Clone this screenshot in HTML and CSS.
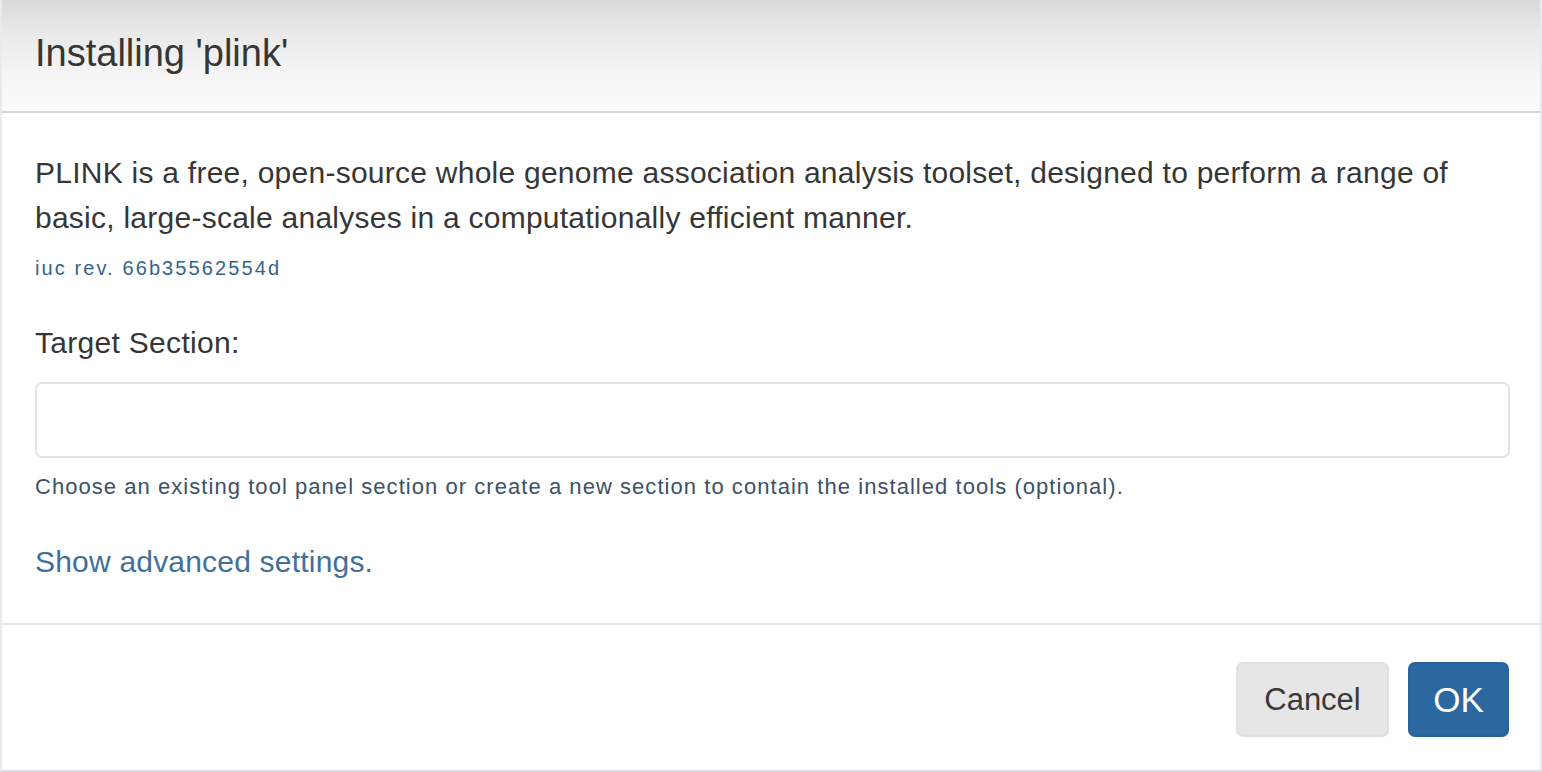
FILE: index.html
```html
<!DOCTYPE html>
<html>
<head>
<meta charset="utf-8">
<title>Installing 'plink'</title>
<link rel="stylesheet" href="styles.css">
</head>
<body>
<div class="modal">
  <div class="modal-header">
    <h4 class="modal-title">Installing 'plink'</h4>
  </div>
  <div class="modal-body">
    <p class="desc">PLINK is a free, open-source whole genome association analysis toolset, designed to perform a range of basic, large-scale analyses in a computationally efficient manner.</p>
    <div class="rev">iuc rev. 66b35562554d</div>
    <label class="label">Target Section:</label>
    <input class="input" type="text">
    <div class="help">Choose an existing tool panel section or create a new section to contain the installed tools (optional).</div>
    <a class="advanced" href="#">Show advanced settings.</a>
  </div>
  <div class="modal-footer">
    <button class="btn btn-default">Cancel</button>
    <button class="btn btn-primary">OK</button>
  </div>
</div>
</body>
</html>
```

FILE: styles.css
```css
html, body {
  margin: 0;
  padding: 0;
  background: #ffffff;
}
body {
  font-family: "Liberation Sans", Arial, sans-serif;
  color: #333333;
}
.modal {
  box-sizing: border-box;
  width: 1542px;
  height: 772px;
  display: flex;
  flex-direction: column;
  border-left: 2px solid #e6ebf1;
  border-right: 2px solid #e6ebf1;
  border-bottom: 2px solid #d9dce0;
  background: #ffffff;
}
.modal-header {
  box-sizing: border-box;
  height: 113px;
  padding: 0 33px;
  display: flex;
  align-items: center;
  background: linear-gradient(to bottom, #d9d9d9 0%, #e9e9e9 30%, #f5f5f5 65%, #fbfbfb 100%);
  border-bottom: 2px solid #d4d4d4;
}
.modal-title {
  margin: 0;
  font-weight: normal;
  font-size: 38px;
  line-height: 44px;
  color: #363636;
  padding-bottom: 6px;
}
.modal-body {
  flex: 1;
  display: flex;
  flex-direction: column;
  align-items: flex-start;
  padding: 37px 33px 0 33px;
}
.desc {
  margin: 0;
  font-size: 30px;
  letter-spacing: 0.25px;
  line-height: 45px;
  color: #363636;
}
.rev {
  margin-top: 14px;
  font-size: 20px;
  letter-spacing: 2.1px;
  line-height: 28px;
  color: #35648a;
}
.label {
  margin-top: 38px;
  font-size: 30px;
  letter-spacing: 0.3px;
  line-height: 45px;
  color: #363636;
}
.input {
  box-sizing: border-box;
  margin-top: 17px;
  width: 1475px;
  height: 76px;
  border: 2px solid #e3e3e3;
  border-radius: 7px;
  background: #ffffff;
  outline: none;
  font-size: 28px;
}
.help {
  margin-top: 15px;
  font-size: 22px;
  letter-spacing: 1.05px;
  line-height: 28px;
  color: #3d5166;
}
.advanced {
  margin-top: 38px;
  font-size: 30px;
  letter-spacing: 0.2px;
  line-height: 45px;
  color: #41709a;
  text-decoration: none;
}
.modal-footer {
  box-sizing: border-box;
  height: 147px;
  border-top: 2px solid #e4e4e4;
  padding: 37px 31px 0 0;
  display: flex;
  justify-content: flex-end;
  align-items: flex-start;
  gap: 19px;
}
.btn {
  box-sizing: border-box;
  height: 75px;
  border-radius: 7px;
  font-family: "Liberation Sans", Arial, sans-serif;
  font-size: 31px;
  padding: 0;
  cursor: pointer;
}
.btn-default {
  width: 153px;
  background: #e6e6e6;
  border: 2px solid #e0e0e0;
  color: #3a3a3a;
}
.btn-primary {
  width: 101px;
  background: #2c67a0;
  border: 2px solid #2a6399;
  color: #ffffff;
  font-size: 35px;
}
```
